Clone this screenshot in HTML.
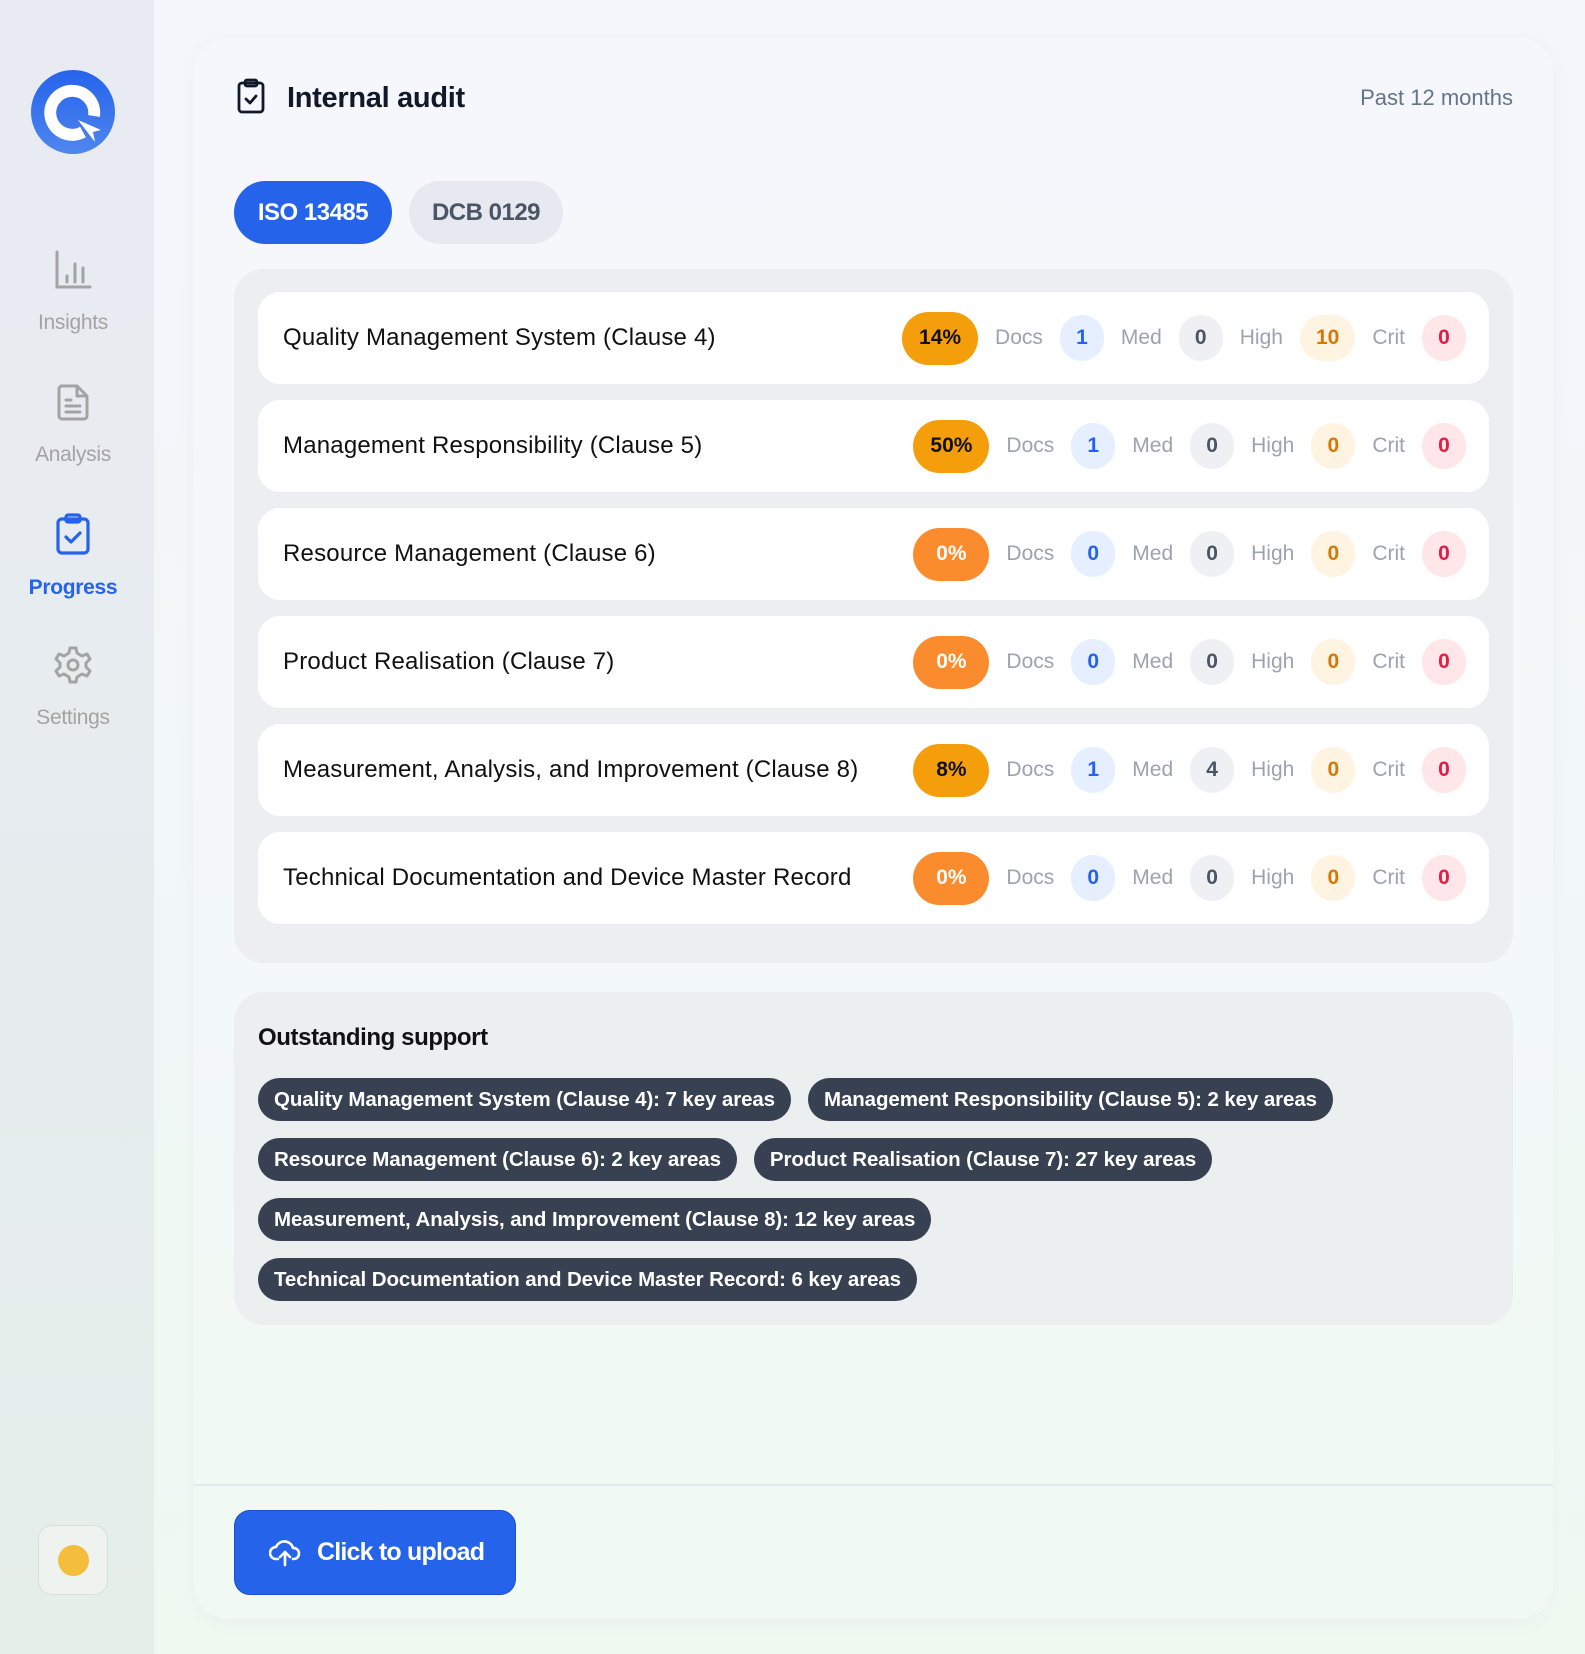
<!DOCTYPE html>
<html><head><meta charset="utf-8"><style>
*{box-sizing:border-box;margin:0;padding:0}
body{width:1585px;height:1654px;font-family:"Liberation Sans",sans-serif;background:linear-gradient(180deg,#f4f6fc 0%,#f1f7f6 60%,#eef9f0 100%);position:relative;overflow:hidden}
.side{position:absolute;left:0;top:0;width:154px;height:1654px;background:linear-gradient(180deg,#e9ebf2 0%,#e6ecee 60%,#e5efea 100%)}
.nav{position:absolute;left:0;width:146px;text-align:center;font-size:21px;color:#a3a3a3;letter-spacing:-0.3px}
.nav svg{display:block;margin:0 auto 21px}
.card{position:absolute;left:194px;top:38px;width:1359px;height:1581px;border-radius:34px;background:linear-gradient(180deg,#f6f7fc 0%,#f3f8f8 60%,#f0faf2 100%);box-shadow:0 4px 20px rgba(0,0,0,0.03)}
.abs{position:absolute}
.tab{position:absolute;top:181px;height:63px;border-radius:32px;font-size:24px;font-weight:bold;display:flex;align-items:center;justify-content:center;letter-spacing:-0.5px}
.panel{position:absolute;left:234px;width:1279px;border-radius:30px;background:#eceef2}
.row{position:absolute;left:24px;width:1231px;height:92px;background:#fff;border-radius:22px;display:flex;align-items:center;padding:0 23px 0 25px}
.row .t{font-size:24px;color:#111;flex:1;letter-spacing:0.2px}
.st{display:flex;align-items:center}
.pct{width:76px;height:53px;border-radius:27px;font-weight:bold;font-size:21px;display:flex;align-items:center;justify-content:center;color:#111;margin-right:17px}
.lb{font-size:21px;color:#9ca3af;margin-right:17px}
.c{min-width:44px;height:46px;border-radius:23px;font-size:21px;font-weight:bold;display:flex;align-items:center;justify-content:center;margin-right:17px;padding:0 16px}
.c:last-child{margin-right:0}
.d{background:#e5efff;color:#2563eb}.m{background:#eff0f3;color:#4b5563}.h{background:#fff4e2;color:#d97706}.k{background:#ffe6e8;color:#e11d48}
.cr{position:absolute;left:258px;display:flex;gap:17px}
.chip{height:43px;border-radius:22px;background:#374151;color:#fff;font-weight:bold;font-size:20.5px;letter-spacing:-0.1px;display:flex;align-items:center;padding:0 16px;white-space:nowrap}
</style></head><body>
<div class="side">
 <svg class="abs" style="left:29px;top:68px" width="88" height="88" viewBox="0 0 88 88">
  <defs><linearGradient id="g" x1="0" y1="0" x2="0" y2="1"><stop offset="0" stop-color="#2563eb"/><stop offset="1" stop-color="#4f86ee"/></linearGradient></defs>
  <circle cx="44" cy="44" r="42" fill="url(#g)"/>
  <path d="M54 64 A22 22 0 1 1 65 48" fill="none" stroke="#fff" stroke-width="12"/>
  <path d="M49 52 L72 62 L64 64 L66 74 Z" fill="#fff"/>
 </svg>
 <div class="nav" style="top:250px"><svg width="40" height="40" viewBox="0 0 40 40" fill="none" stroke="#a3a3a3" stroke-width="3" stroke-linecap="round"><path d="M4 2V37H37M14 26V32M22 14V32M30 18V32"/></svg>Insights</div>
 <div class="nav" style="top:382px"><svg width="40" height="40" viewBox="0 0 40 40" fill="none" stroke="#a3a3a3" stroke-width="3" stroke-linecap="round" stroke-linejoin="round"><path d="M8 4H24L34 14V34a3 3 0 0 1-3 3H9a3 3 0 0 1-3-3V7a3 3 0 0 1 3-3ZM24 4V14H34M13 18H18M13 24H27M13 30H27"/></svg>Analysis</div>
 <div class="nav" style="top:513px;color:#2563eb;font-weight:bold"><svg width="40" height="42" viewBox="0 0 40 42" fill="none" stroke="#2563eb" stroke-width="3.2" stroke-linecap="round" stroke-linejoin="round"><rect x="5" y="6" width="30" height="34" rx="4"/><rect x="13" y="2" width="14" height="7" rx="2"/><path d="M13 24L18 29L27 20"/></svg>Progress</div>
 <div class="nav" style="top:645px"><svg width="40" height="40" viewBox="0 0 40 40" fill="none" stroke="#a3a3a3" stroke-width="3" stroke-linejoin="round"><path d="M17 3H23L24 8L29 11L34 9L37 14L33 18V22L37 26L34 31L29 29L24 32L23 37H17L16 32L11 29L6 31L3 26L7 22V18L3 14L6 9L11 11L16 8Z"/><circle cx="20" cy="20" r="5"/></svg>Settings</div>
 <div class="abs" style="left:38px;top:1525px;width:70px;height:70px;border-radius:14px;background:#eef3f0;border:1px solid #d9dedb"><div class="abs" style="left:19px;top:19px;width:31px;height:31px;border-radius:50%;background:#f5bd3c"></div></div>
</div>
<div class="card" style="z-index:-1"></div>
<svg class="abs" style="left:236px;top:78px" width="30" height="36" viewBox="0 0 30 36" fill="none" stroke="#111827" stroke-width="2.8" stroke-linecap="round" stroke-linejoin="round"><rect x="3" y="5" width="24" height="29" rx="3"/><rect x="9" y="2" width="12" height="6" rx="2"/><path d="M10 21L14 25L20 18"/></svg>
<div class="abs" style="left:287px;top:82px;font-size:29px;font-weight:bold;color:#111827;letter-spacing:-0.3px">Internal audit</div>
<div class="abs" style="left:1300px;width:213px;text-align:right;top:85px;font-size:22px;color:#64748b">Past 12 months</div>
<div class="tab" style="left:234px;width:158px;background:#2563eb;color:#fff">ISO 13485</div>
<div class="tab" style="left:409px;width:154px;background:#e6e9f0;color:#4b5563">DCB 0129</div>
<div class="panel" style="top:269px;height:694px">
 <div class="row" style="top:23px"><div class="t">Quality Management System (Clause 4)</div><div class="st"><div class="pct" style="background:#f59e0b">14%</div><span class="lb">Docs</span><div class="c d">1</div><span class="lb">Med</span><div class="c m">0</div><span class="lb">High</span><div class="c h">10</div><span class="lb">Crit</span><div class="c k">0</div></div></div>
 <div class="row" style="top:131px"><div class="t">Management Responsibility (Clause 5)</div><div class="st"><div class="pct" style="background:#f59e0b">50%</div><span class="lb">Docs</span><div class="c d">1</div><span class="lb">Med</span><div class="c m">0</div><span class="lb">High</span><div class="c h">0</div><span class="lb">Crit</span><div class="c k">0</div></div></div>
 <div class="row" style="top:239px"><div class="t">Resource Management (Clause 6)</div><div class="st"><div class="pct" style="background:#fb8c2e;color:#fff">0%</div><span class="lb">Docs</span><div class="c d">0</div><span class="lb">Med</span><div class="c m">0</div><span class="lb">High</span><div class="c h">0</div><span class="lb">Crit</span><div class="c k">0</div></div></div>
 <div class="row" style="top:347px"><div class="t">Product Realisation (Clause 7)</div><div class="st"><div class="pct" style="background:#fb8c2e;color:#fff">0%</div><span class="lb">Docs</span><div class="c d">0</div><span class="lb">Med</span><div class="c m">0</div><span class="lb">High</span><div class="c h">0</div><span class="lb">Crit</span><div class="c k">0</div></div></div>
 <div class="row" style="top:455px"><div class="t">Measurement, Analysis, and Improvement (Clause 8)</div><div class="st"><div class="pct" style="background:#f59e0b">8%</div><span class="lb">Docs</span><div class="c d">1</div><span class="lb">Med</span><div class="c m">4</div><span class="lb">High</span><div class="c h">0</div><span class="lb">Crit</span><div class="c k">0</div></div></div>
 <div class="row" style="top:563px"><div class="t">Technical Documentation and Device Master Record</div><div class="st"><div class="pct" style="background:#fb8c2e;color:#fff">0%</div><span class="lb">Docs</span><div class="c d">0</div><span class="lb">Med</span><div class="c m">0</div><span class="lb">High</span><div class="c h">0</div><span class="lb">Crit</span><div class="c k">0</div></div></div>
</div>
<div class="panel" style="top:992px;height:333px;background:#eceff0"></div>
<div class="abs" style="left:258px;top:1024px;font-size:24px;font-weight:bold;color:#111;letter-spacing:-0.4px">Outstanding support</div>
<div class="cr" style="top:1078px"><div class="chip">Quality Management System (Clause 4): 7 key areas</div><div class="chip">Management Responsibility (Clause 5): 2 key areas</div></div>
<div class="cr" style="top:1138px"><div class="chip">Resource Management (Clause 6): 2 key areas</div><div class="chip">Product Realisation (Clause 7): 27 key areas</div></div>
<div class="cr" style="top:1198px"><div class="chip">Measurement, Analysis, and Improvement (Clause 8): 12 key areas</div></div>
<div class="cr" style="top:1258px"><div class="chip">Technical Documentation and Device Master Record: 6 key areas</div></div>
<div class="abs" style="left:194px;top:1484px;width:1359px;height:2px;background:#e4e7ec"></div>
<div class="abs" style="left:234px;top:1510px;width:282px;height:85px;border-radius:16px;background:#2563eb;border:1px solid #1d4fd0;display:flex;align-items:center;color:#fff;font-size:25px;font-weight:bold;letter-spacing:-0.8px">
 <svg style="margin:0 16px 0 34px" width="32" height="28" viewBox="0 0 32 28" fill="none" stroke="#fff" stroke-width="2.6" stroke-linecap="round" stroke-linejoin="round"><path d="M9 20H7a6 6 0 0 1 0-12 9 9 0 0 1 17 1 5.5 5.5 0 0 1 1 11h-1M16 26V14M11 18L16 13L21 18"/></svg>Click to upload</div>
</body></html>
